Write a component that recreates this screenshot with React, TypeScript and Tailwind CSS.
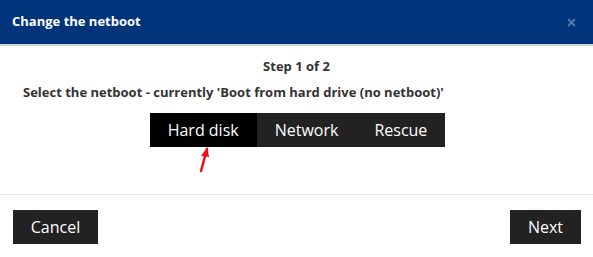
import { X } from 'lucide-react';

export default function App() {
  const tabs = ['Hard disk', 'Network', 'Rescue'];
  return (
    <div className="w-[593px] h-[257px] bg-white text-[#333] font-['Open_Sans',sans-serif] overflow-hidden">
      {/* Header */}
      <div className="h-[46px] bg-[#00347a] border-b-2 border-[#cfd4d9] flex items-center justify-between pl-3 pr-4">
        <h1 className="text-[13px] font-bold text-white">Change the netboot</h1>
        <X className="w-[11px] h-[11px] text-[#4f73a3]" strokeWidth={5} />
      </div>

      {/* Body */}
      <div className="h-[149px] border-b border-[#e5e5e5] pt-[11px] flex flex-col">
        <p className="text-center text-[13px] font-bold leading-[18px]">Step 1 of 2</p>
        <p className="pl-[23px] pt-[8px] text-[13px] font-bold leading-[18px]">
          Select the netboot - currently 'Boot from hard drive (no netboot)'
        </p>
        <div className="relative flex justify-center pt-[12px] pl-[2px]">
          <div className="flex">
            {tabs.map((t, i) => (
              <button
                key={t}
                className={`h-[34px] px-[18px] text-[16px] text-white ${i === 0 ? 'bg-black' : 'bg-[#222]'}`}
              >
                {t}
              </button>
            ))}
          </div>
          <svg className="absolute left-[195px] top-[44px]" width="18" height="28" viewBox="0 0 18 28">
            <path d="M6 26 L12 4" stroke="#e8101c" strokeWidth="2.5" strokeLinecap="round" />
            <path d="M12.5 2 L6 11 L14 12 Z" fill="#e8101c" />
          </svg>
        </div>
      </div>

      {/* Footer */}
      <div className="flex justify-between items-center pl-[13px] pr-[12px] pt-[15px]">
        <button className="h-[34px] w-[85px] bg-[#222] text-white text-[16px]">Cancel</button>
        <button className="h-[34px] w-[71px] bg-[#222] text-white text-[16px]">Next</button>
      </div>
    </div>
  );
}
